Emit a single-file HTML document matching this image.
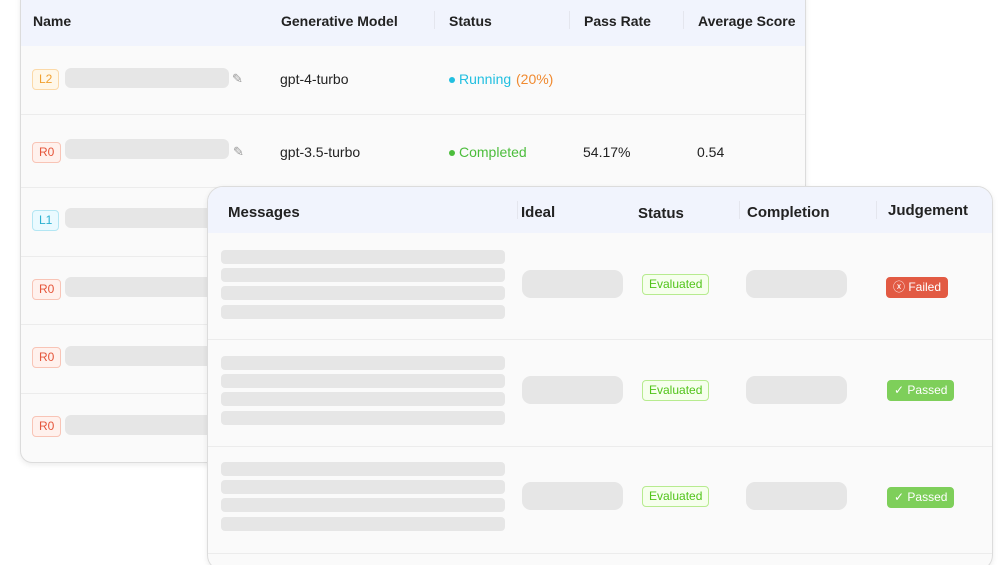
<!DOCTYPE html>
<html style="overflow:hidden;height:565px"><head><style>
*{margin:0;padding:0;box-sizing:border-box}
body{width:1000px;height:565px;background:#fff;position:relative;overflow:hidden;font-family:"Liberation Sans",sans-serif;color:#222}
.a{position:absolute}
.card{position:absolute;background:#fafafa;border:1px solid #dcdcdc;overflow:hidden;box-shadow:0 2px 6px rgba(0,0,0,.08)}
.hd{position:absolute;left:0;right:0;top:0;background:#f1f4fd}
.th{position:absolute;font-weight:bold;font-size:14px;color:#222}
.sep{position:absolute;width:1px;height:18px;background:#e4e6ee}
.row{position:absolute;left:0;right:0;height:1px;background:#ececec}
.sk{position:absolute;background:#e6e6e6;border-radius:6px}
.tag{position:absolute;height:21px;padding:0 6px;font-size:12px;line-height:19px;border-radius:4px;border:1px solid}
.td{position:absolute;font-size:14px}
</style></head><body>
<div class="card" style="left:20px;top:-12px;width:786px;height:475px;border-radius:12px">
 <div class="hd" style="height:57px"></div>
 <div class="th" style="left:12px;top:24px">Name</div>
 <div class="th" style="left:260px;top:24px">Generative Model</div>
 <div class="th" style="left:428px;top:24px">Status</div>
 <div class="th" style="left:563px;top:24px">Pass Rate</div>
 <div class="th" style="left:677px;top:24px">Average Score</div>
 <div class="sep" style="left:413px;top:22px"></div>
 <div class="sep" style="left:548px;top:22px"></div>
 <div class="sep" style="left:662px;top:22px"></div>
 <div class="row" style="top:125px"></div><div class="row" style="top:198px"></div><div class="row" style="top:267px"></div><div class="row" style="top:335px"></div><div class="row" style="top:404px"></div>
</div>
<div class="tag" style="left:32px;top:69px;color:#f0a030;border-color:#fbd9a8;background:#fff7e8">L2</div>
<div class="sk" style="left:65px;top:68px;width:164px;height:20px"></div>
<div class="a" style="left:232px;top:71px;color:#999;font-size:13px">✎</div>
<div class="td" style="left:280px;top:71px">gpt-4-turbo</div>
<div class="a" style="left:449px;top:77px;width:6px;height:6px;border-radius:50%;background:#21bfe0"></div>
<div class="td" style="left:459px;top:71px;color:#21bfe0">Running</div>
<div class="td" style="left:516px;top:71px;color:#f08a30">(20%)</div>

<div class="tag" style="left:32px;top:142px;color:#e5553a;border-color:#f8c4b6;background:#fff1ed">R0</div>
<div class="sk" style="left:65px;top:139px;width:164px;height:20px"></div>
<div class="a" style="left:233px;top:144px;color:#999;font-size:13px">✎</div>
<div class="td" style="left:280px;top:144px">gpt-3.5-turbo</div>
<div class="a" style="left:449px;top:150px;width:6px;height:6px;border-radius:50%;background:#4cbd3c"></div>
<div class="td" style="left:459px;top:144px;color:#4cbd3c">Completed</div>
<div class="td" style="left:583px;top:144px">54.17%</div>
<div class="td" style="left:697px;top:144px">0.54</div>

<div class="tag" style="left:32px;top:210px;color:#2ab0d0;border-color:#b3e6f3;background:#eafaff">L1</div>
<div class="sk" style="left:65px;top:208px;width:160px;height:20px"></div>
<div class="tag" style="left:32px;top:279px;color:#e5553a;border-color:#f8c4b6;background:#fff1ed">R0</div>
<div class="sk" style="left:65px;top:277px;width:160px;height:20px"></div>
<div class="tag" style="left:32px;top:347px;color:#e5553a;border-color:#f8c4b6;background:#fff1ed">R0</div>
<div class="sk" style="left:65px;top:346px;width:160px;height:20px"></div>
<div class="tag" style="left:32px;top:416px;color:#e5553a;border-color:#f8c4b6;background:#fff1ed">R0</div>
<div class="sk" style="left:65px;top:415px;width:160px;height:20px"></div>

<div class="card" style="left:207px;top:186px;width:786px;height:385px;border-radius:16px;background:#fafafa">
 <div class="hd" style="height:46px"></div>
 <div class="th" style="left:20px;top:17px;font-size:15px">Messages</div>
 <div class="th" style="left:313px;top:17px;font-size:15px">Ideal</div>
 <div class="th" style="left:430px;top:18px;font-size:15px">Status</div>
 <div class="th" style="left:539px;top:17px;font-size:15px">Completion</div>
 <div class="th" style="left:680px;top:15px;font-size:15px">Judgement</div>
 <div class="sep" style="left:309px;top:14px"></div>
 <div class="sep" style="left:531px;top:14px"></div>
 <div class="sep" style="left:668px;top:14px"></div>
 <div class="row" style="top:152px"></div><div class="row" style="top:259px"></div><div class="row" style="top:366px"></div>
</div>
<div id="f"></div>
<script>
var h='';[0,106,212].forEach(function(d,i){
[250,268,286,305].forEach(function(y){h+='<div class="sk" style="left:221px;top:'+(y+d)+'px;width:284px;height:14px;border-radius:4px"></div>'});
h+='<div class="sk" style="left:522px;top:'+(270+d)+'px;width:101px;height:28px;border-radius:9px"></div>';
h+='<div class="sk" style="left:746px;top:'+(270+d)+'px;width:101px;height:28px;border-radius:9px"></div>';
h+='<div class="tag" style="left:642px;top:'+(274+d)+'px;color:#52c41a;border-color:#b7eb8f;background:#f6ffed;font-size:12px">Evaluated</div>';
if(i==0)h+='<div class="tag" style="left:886px;top:'+(277+d)+'px;color:#fff;border-color:#e25a43;background:#e25a43">ⓧ Failed</div>';
else h+='<div class="tag" style="left:887px;top:'+(380+(i-1)*107)+'px;color:#fff;border-color:#7ecf5a;background:#7ecf5a">✓ Passed</div>';
});document.getElementById('f').outerHTML=h;
</script>
</body></html>
